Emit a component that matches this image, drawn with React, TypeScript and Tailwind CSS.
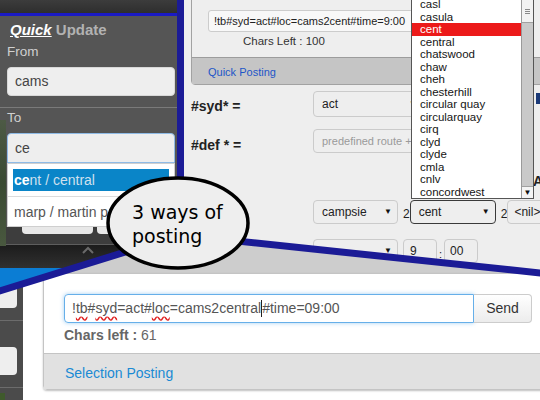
import React from 'react';

const stations = [
  'casl', 'casula', 'cent', 'central', 'chatswood', 'chaw', 'cheh', 'chesterhill',
  'circular quay', 'circularquay', 'cirq', 'clyd', 'clyde', 'cmla', 'cnlv', 'concordwest',
];

function Caret() {
  return <span className="text-[8px] leading-none text-[#111]">▼</span>;
}

function LeftPanel() {
  return (
    <div className="absolute left-0 top-0 w-[177px] h-[300px] flex flex-col bg-[#555555] overflow-hidden">
      <div className="h-[13px] shrink-0 bg-gradient-to-b from-[#3c3c3c] to-[#2e2e2e]" />
      <div className="h-[3px] shrink-0 bg-[#1a1ac4]" />
      <div className="mt-[5px] pl-[10px] h-[18px] leading-[18px] text-[15px] font-bold">
        <span className="italic underline text-white">Quick</span>{' '}
        <span className="text-[#b2b2b2]">Update</span>
      </div>
      <div className="mt-[5px] pl-[7px] h-[16px] leading-[16px] text-[13.5px] text-[#d0d0d0]">From</div>
      <div className="mt-[7px] ml-[7px] w-[168px] h-[29px] shrink-0 rounded-[4px] bg-[#eeeeee] border border-[#d8d8d8] flex items-center pl-[7px] text-[14px] text-[#444]">
        cams
      </div>
      <div className="mt-[11px] h-px shrink-0 bg-[#7a7a7a]" />
      <div className="mt-[2px] pl-[7px] h-[16px] leading-[16px] text-[13.5px] text-[#d0d0d0]">To</div>
      <div className="mt-[7px] ml-[7px] w-[168px] h-[30px] shrink-0 rounded-t-[4px] bg-[#eeeeee] border border-[#8fbbe6] flex items-center pl-[7px] text-[14px] text-[#444]">
        ce
      </div>
      <div className="ml-[7px] w-[168px] h-[64px] shrink-0 bg-white border border-[#cfcfcf] flex flex-col px-[5px] pt-[5px]">
        <div className="h-[22px] bg-[#0a85c8] flex items-center pl-[1px] text-[14px] text-[#cfe0ee]">
          <span className="font-bold text-white">ce</span>nt / central
        </div>
        <div className="mt-[5px] border-t border-[#dcdcdc] -mx-[5px] h-[30px] leading-[30px] pl-[6px] text-[14px] text-[#555]">
          marp / martin park
        </div>
      </div>
      <div className="h-[17px] shrink-0 bg-[#3d3d3d] flex gap-[4px] pl-[22px]">
        <div className="w-[71px] h-[7px] bg-[#e8e8e8] rounded-b-[4px]" />
        <div className="w-[73px] h-[7px] bg-[#e8e8e8] rounded-b-[4px]" />
      </div>
      <div className="h-px shrink-0 bg-[#5e5e5e]" />
      <div className="h-[23px] shrink-0 bg-gradient-to-b from-[#1c1c1c] to-[#303030] flex justify-center pr-[2px]">
        <svg width="14" height="9" viewBox="0 0 14 9" className="mt-[1px]">
          <polyline points="2,7 7,2 12,7" fill="none" stroke="#6a6a6a" strokeWidth="2" />
        </svg>
      </div>
      <div className="flex-1 bg-[#0b7dd4]" />
      <div className="absolute left-0 top-[120px] w-[6px] h-[126px] bg-gradient-to-b from-[#4d5a45] via-[#3a4a32] to-[#49583f]" />
    </div>
  );
}

function SelectBox({ w, text, muted, dark }: { w: string; text: string; muted?: boolean; dark?: boolean }) {
  return (
    <div
      className={`${w} h-full shrink-0 rounded-[4px] border ${dark ? 'border-[#3a3a3a]' : 'border-[#cbcbcb]'} bg-[#eeeeee] flex items-center justify-between pl-[8px] pr-[5px] ${muted ? 'text-[11px] text-[#9a9a9a]' : 'text-[12px] text-[#222]'}`}
    >
      <span className="whitespace-nowrap">{text}</span>
      {!muted && <Caret />}
    </div>
  );
}

function MiddlePanel() {
  return (
    <div className="absolute left-[184px] top-0 right-0 h-[290px] bg-[#eeeeee] overflow-hidden flex flex-col">
      <div className="ml-[7px] -mt-px w-[420px] h-[86px] shrink-0 border border-[#a2a2a2] rounded-bl-[4px] flex flex-col">
        <div className="mt-[10px] ml-[16px] w-[270px] h-[22px] shrink-0 bg-[#f8f8f8] border border-[#cccccc] rounded-[3px] flex items-center pl-[5px] text-[11px] text-[#222] whitespace-nowrap">
          !tb#syd=act#loc=cams2cent#time=9:00
        </div>
        <div className="mt-[2px] ml-[51px] h-[14px] leading-[14px] text-[11.5px] text-[#333]">Chars Left : 100</div>
        <div className="mt-[9px] flex-1 bg-[#c5c5c5] border-t border-[#9c9c9c] flex items-center pt-[2px] pl-[16px] text-[11px] text-[#1d55c8]">
          Quick Posting
        </div>
      </div>
      <div className="mt-[6px] h-[26px] shrink-0 flex items-center">
        <div className="w-[129px] pl-[7px] pt-[4px] text-[14px] font-bold text-[#222]">#syd* =</div>
        <SelectBox w="w-[110px]" text="act" />
      </div>
      <div className="mt-[12px] h-[24px] shrink-0 flex items-center">
        <div className="w-[129px] pl-[7px] pt-[8px] text-[14px] font-bold text-[#222]">#def * =</div>
        <SelectBox w="w-[110px]" text="predefined route +" muted />
      </div>
      <div className="mt-[47px] h-[24px] shrink-0 flex items-center pl-[129px]">
        <SelectBox w="w-[85px]" text="campsie" />
        <span className="w-[13px] pl-[5px] pt-[4px] text-[12px] text-[#222]">2</span>
        <SelectBox w="w-[86px]" text="cent" dark />
        <span className="w-[14px] pl-[5px] pt-[4px] text-[12px] text-[#222]">2</span>
        <div className="w-[40px] h-full shrink-0 border border-[#cbcbcb] rounded-[4px] flex items-center pl-[6px] text-[12px] text-[#222]">
          &lt;nil&gt;
        </div>
      </div>
      <div className="mt-[15px] h-[24px] shrink-0 flex items-center pl-[129px]">
        <SelectBox w="w-[85px]" text="" />
        <div className="ml-[5px] w-[34px] h-full shrink-0 border border-[#cbcbcb] rounded-[4px] flex items-center pl-[6px] text-[12px] text-[#222]">9</div>
        <span className="w-[7px] text-center pt-[6px] text-[11px] text-[#222]">:</span>
        <div className="w-[34px] h-full shrink-0 border border-[#cbcbcb] rounded-[4px] flex items-center pl-[5px] text-[12px] text-[#222]">00</div>
      </div>
      <div className="absolute left-[352px] top-[93px] w-[6px] h-[11px] bg-[#1b3a78]" />
      <div className="absolute left-[349px] top-[171px] text-[14px] font-bold text-[#222]">A</div>
    </div>
  );
}

function DropdownList() {
  return (
    <div className="absolute left-[411px] top-0 w-[123px] h-[199px] bg-white border border-t-0 border-[#555] flex overflow-hidden">
      <div className="flex-1 flex flex-col -mt-[2px]">
        {stations.map((s) => (
          <div
            key={s}
            className={`h-[12.5px] shrink-0 leading-[12.5px] pl-[8px] text-[11.5px] whitespace-nowrap ${s === 'cent' ? 'bg-[#ec1a1a] text-white' : 'text-[#151515]'}`}
          >
            {s}
          </div>
        ))}
      </div>
      <div className="w-[12px] shrink-0 bg-[#c9c9c9] border-l border-[#9a9a9a] flex flex-col">
        <div className="h-[23px] bg-[#f2f2f2] border-b border-[#a0a0a0] flex flex-col items-center justify-center gap-[1px]">
          <div className="w-[5px] h-px bg-[#888]" />
          <div className="w-[5px] h-px bg-[#888]" />
          <div className="w-[5px] h-px bg-[#888]" />
        </div>
        <div className="flex-1" />
        <div className="h-[12px] bg-[#f4f4f4] border-t border-[#a0a0a0] flex items-center justify-center">
          <Caret />
        </div>
      </div>
    </div>
  );
}

function BottomShot() {
  return (
    <div className="absolute inset-0 flex bg-white [clip-path:polygon(0_291px,180px_235px,540px_273px,540px_400px,0_400px)]">
      <div className="w-[23px] shrink-0 bg-[#4b4b4b] flex flex-col">
        <div className="mt-[283px] w-[17px] h-[25px] bg-[#eeeeee] rounded-r-[4px]" />
        <div className="mt-[12px] h-px bg-[#6c6c6c]" />
        <div className="mt-[26px] w-[17px] h-[28px] bg-[#eeeeee] rounded-r-[4px]" />
        <div className="mt-[12px] h-px bg-[#6c6c6c]" />
        <div className="mt-[5px] w-[5px] flex-1 bg-[#3f5a2c]" />
      </div>
      <div className="flex-1 flex flex-col overflow-hidden">
        <div className="h-[273px] shrink-0 bg-[#cdcdcd]" />
        <div className="pl-[20px]">
          <div className="w-[520px] border border-[#c4c4c4] rounded-bl-[4px] shadow-[0_1px_2px_rgba(0,0,0,0.25)] flex flex-col">
            <div className="h-[79px] pl-[20px] pt-[20px] flex flex-col">
              <div className="h-[29px] flex">
                <div className="w-[410px] h-full border border-[#66afe9] rounded-l-[4px] shadow-[0_0_4px_rgba(102,175,233,0.6)] flex items-center pl-[7px] text-[14px] text-[#555] whitespace-nowrap">
                  !<span className="underline decoration-wavy decoration-[#e02020] underline-offset-[3px]">tb</span>#
                  <span className="underline decoration-wavy decoration-[#e02020] underline-offset-[3px]">syd</span>=act#
                  <span className="underline decoration-wavy decoration-[#e02020] underline-offset-[3px]">loc</span>=cams2central
                  <span className="inline-block w-px h-[17px] bg-[#222]" />#time=09:00
                </div>
                <div className="w-[58px] h-full border border-l-0 border-[#cccccc] rounded-r-[4px] bg-gradient-to-b from-[#ffffff] to-[#ececec] flex items-center justify-center text-[14px] text-[#333]">
                  Send
                </div>
              </div>
              <div className="mt-[4px] h-[16px] leading-[16px] text-[14px] text-[#666]">
                <span className="font-bold">Chars left :</span> 61
              </div>
            </div>
            <div className="h-[36px] bg-[#e1e1e1] border-t border-[#c4c4c4] flex items-center pt-[4px] pl-[21px] text-[14px] text-[#1a8ad4]">
              Selection Posting
            </div>
          </div>
        </div>
      </div>
    </div>
  );
}

export default function App() {
  return (
    <div className="relative w-[540px] h-[400px] overflow-hidden bg-[#eeeeee] font-['Liberation_Sans',Arial,sans-serif]">
      <LeftPanel />
      <div className="absolute left-[177px] top-0 w-[7px] h-[260px] bg-[#1b1b96]" />
      <MiddlePanel />
      <DropdownList />
      <BottomShot />
      <svg className="absolute inset-0" width="540" height="400" viewBox="0 0 540 400">
        <polyline points="-5,292.5 180,235 545,273.5" fill="none" stroke="#1b1b96" strokeWidth="7" />
      </svg>
      <div className="absolute left-[105px] top-[175px] w-[146px] h-[96px]">
        <svg className="absolute inset-0" width="146" height="96" viewBox="0 0 146 96">
          <ellipse cx="73" cy="48" rx="70" ry="45" fill="#eeeeee" stroke="#000" strokeWidth="3.5" />
        </svg>
        <div className="absolute left-[27px] top-[25px] text-[19px] leading-[24px] text-black font-['DejaVu_Sans',sans-serif]">
          <div>3 ways of</div>
          <div>posting</div>
        </div>
      </div>
    </div>
  );
}
